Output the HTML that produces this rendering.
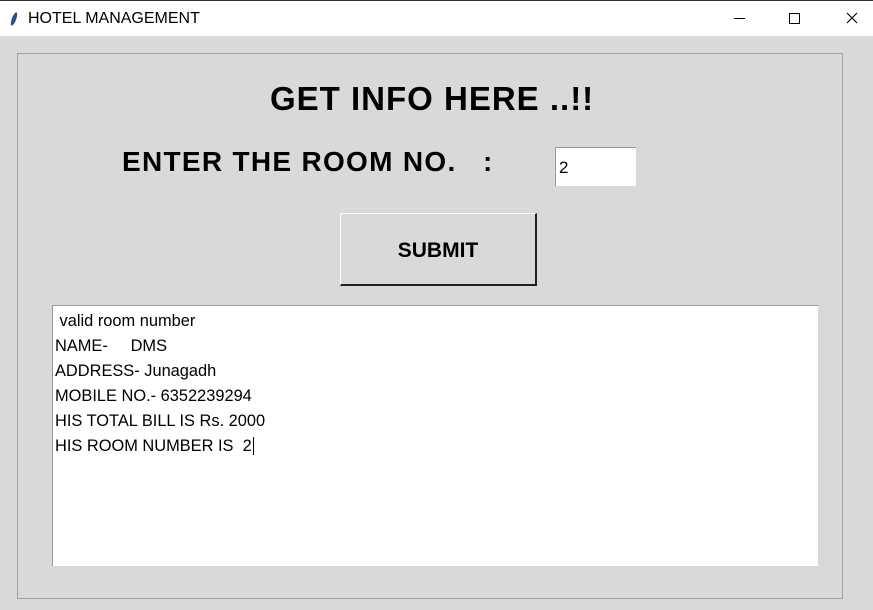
<!DOCTYPE html>
<html><head><meta charset="utf-8"><style>
body{margin:0;width:873px;height:610px;background:#d9d9d9;position:relative;overflow:hidden;font-family:"Liberation Sans",sans-serif;}
.tb{position:absolute;left:0;top:0;width:873px;height:36px;background:#fff;border-top:1px solid #333;box-sizing:border-box}
.tb .t{position:absolute;left:28px;top:9px;font-size:16px;color:#000}
.frame{position:absolute;left:17px;top:53px;width:826px;height:546px;border:1px solid #a0a0a0;box-sizing:border-box}
.h1{position:absolute;left:270px;top:80px;font-size:33px;font-weight:bold;letter-spacing:1px}
.h2{position:absolute;left:122px;top:146px;font-size:28px;font-weight:bold;letter-spacing:1.3px}
.h2c{position:absolute;left:483px;top:146px;font-size:28px;font-weight:bold}
.inp{position:absolute;left:555px;top:147px;width:81px;height:39px;background:#fff;border-top:1px solid #999;border-left:1px solid #999;box-sizing:border-box;font-size:17px;padding:10px 0 0 3px}
.btn{position:absolute;left:340px;top:213px;width:197px;height:73px;box-sizing:border-box;border-top:1px solid #fff;border-left:1px solid #fff;border-right:2px solid #222;border-bottom:2px solid #222;font-size:21px;font-weight:bold;text-align:center;line-height:74px}
.txt{position:absolute;left:52px;top:305px;width:766px;height:261px;background:#fff;border-top:1px solid #999;border-left:1px solid #999;box-sizing:border-box;font-size:16.4px;line-height:25px;padding:3px 0 0 2px;white-space:pre}
</style></head><body>
<div class="tb"><svg style="position:absolute;left:9px;top:10px" width="10" height="16"><ellipse cx="5" cy="8" rx="2.2" ry="7" transform="rotate(20 5 8)" fill="#2a4d8f"/></svg><span class="t">HOTEL MANAGEMENT</span>
<span style="position:absolute;left:734px;top:17px;width:11px;height:1px;background:#000"></span>
<span style="position:absolute;left:789px;top:12px;width:9px;height:9px;border:1px solid #000"></span>
<svg style="position:absolute;left:846px;top:11px" width="12" height="12"><path d="M1 1L11 11M11 1L1 11" stroke="#000" stroke-width="1.1"/></svg></div>
<div class="frame"></div>
<div class="h1">GET INFO HERE ..!!</div>
<div class="h2">ENTER THE ROOM NO.</div><div class="h2c">:</div>
<div class="inp">2</div>
<div class="btn">SUBMIT</div>
<div class="txt"> valid room number
NAME-     DMS
ADDRESS- Junagadh
MOBILE NO.- 6352239294
HIS TOTAL BILL IS Rs. 2000
HIS ROOM NUMBER IS  2<span style="border-left:1px solid #000;margin-left:1px"></span></div>
</body></html>
